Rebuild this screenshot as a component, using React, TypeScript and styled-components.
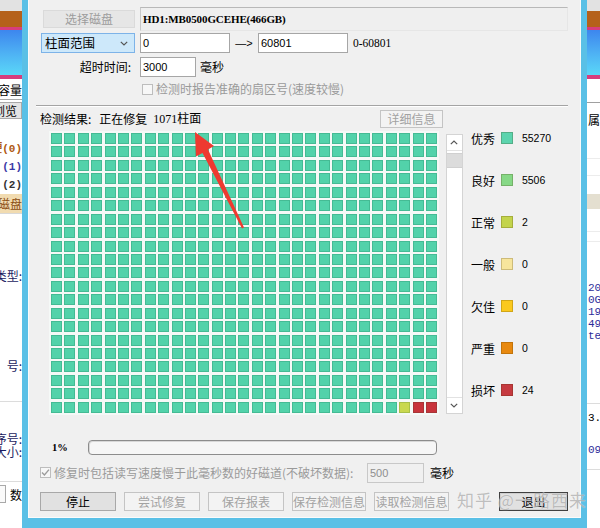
import React from "react";
import styled, { createGlobalStyle } from "styled-components";

const GlobalStyle = createGlobalStyle`
  html, body { margin: 0; padding: 0; background: #fff; }
  body {
    font-family: "Noto Sans CJK SC", "Noto Sans", sans-serif;
    font-size: 12px;
    color: #000;
  }
  * { box-sizing: border-box; }
`;

const CJK = `"Noto Sans CJK SC", "Noto Sans", sans-serif`;
const BLUE = "#5ac0e6";

/* ---------- page ---------- */
const Screen = styled.div`
  position: relative;
  width: 600px;
  height: 528px;
  overflow: hidden;
  display: flex;
  background: #fff;
`;

/* ---------- background windows (strips at the sides) ---------- */
const Strip = styled.div<{ $w: number }>`
  flex: none;
  width: ${(p) => p.$w}px;
  height: 100%;
  display: flex;
  flex-direction: column;
  overflow: hidden;
  background: #fff;
`;

const HeadLight = styled.div`
  flex: none;
  height: 11px;
  background: #e2e2e2;
`;
const HeadBrown = styled.div`
  flex: none;
  height: 16px;
  background: #b5611b;
`;
const HeadAccent = styled.div`
  flex: none;
  height: 3px;
  background: #d73d7e;
`;
const HeadGradient = styled.div`
  flex: none;
  height: 45px;
  background: linear-gradient(#3d86ee, #4fb4f4 55%, #5ad7f8);
`;
const HeadAccentLow = styled.div`
  flex: none;
  height: 4px;
  background: #d73d7e;
`;

const StripRow = styled.div<{
  $h: number;
  $side: "left" | "right";
  $color?: string;
  $bg?: string;
  $line?: string;
  $mono?: boolean;
  $bold?: boolean;
}>`
  flex: none;
  height: ${(p) => p.$h}px;
  display: flex;
  align-items: center;
  justify-content: ${(p) => (p.$side === "left" ? "flex-end" : "flex-start")};
  padding-left: ${(p) => (p.$side === "right" ? "1px" : "0")};
  white-space: nowrap;
  font-family: ${(p) => (p.$mono ? `"Liberation Mono", ${CJK}` : CJK)};
  font-size: ${(p) => (p.$mono ? "11px" : "12px")};
  font-weight: ${(p) => (p.$bold ? 700 : 400)};
  line-height: 13px;
  color: ${(p) => p.$color || "#000"};
  background: ${(p) => p.$bg || "transparent"};
  border-bottom: ${(p) => (p.$line ? `1px solid ${p.$line}` : "0")};
`;

const StripButton = styled.div`
  height: 17px;
  margin-left: 3px;
  padding: 0 4px;
  border: 1px solid #a9a9a9;
  background: #e4e4e4;
  line-height: 15px;
  font-size: 12px;
`;

const StripBox = styled.div`
  width: 10px;
  height: 18px;
  margin-right: 4px;
  border: 1px solid #a9a9a9;
  background: #fafafa;
  flex: none;
`;

/* ---------- dialog ---------- */
const Dialog = styled.div`
  flex: none;
  width: 565px;
  height: 528px;
  border: 6px solid ${BLUE};
  border-top: 0;
  border-bottom-width: 10px;
  background: #f0f0f0;
  box-shadow: inset 1px 0 0 #fbfbfb, inset -1px 0 0 #fbfbfb, inset 0 -1px 0 #fbfbfb;
  display: flex;
  flex-direction: column;
  padding: 0 13px 0 12px;
`;

const Row = styled.div<{ $top: number; $h: number }>`
  flex: none;
  display: flex;
  align-items: center;
  margin-top: ${(p) => p.$top}px;
  height: ${(p) => p.$h}px;
  white-space: nowrap;
  line-height: 14px;
`;

const DiskButton = styled.div`
  width: 92px;
  height: 18px;
  margin-left: 3px;
  background: #e6e6e6;
  border: 1px solid #dadada;
  color: #9c9c9c;
  text-align: center;
  line-height: 16px;
`;

const DiskLabel = styled.div`
  margin-left: 5px;
  width: 428px;
  height: 24px;
  display: flex;
  align-items: center;
  padding-left: 2px;
  background: #efefef;
  border: 1px solid #e6e6e6;
  border-top-color: #b8b8b8;
  border-left-color: #c8c8c8;
  font-family: "Liberation Serif", ${CJK};
  font-weight: 700;
  font-size: 11px;
  letter-spacing: -0.1px;
`;

const Select = styled.div`
  width: 94px;
  height: 20px;
  margin-left: 1px;
  display: flex;
  align-items: center;
  justify-content: space-between;
  padding: 0 6px 0 3px;
  background: #cde8fa;
  border: 1px solid #7db3e8;
  font-size: 12.5px;
`;

const TextBox = styled.div<{ $w: number; $disabled?: boolean; $gap?: number }>`
  width: ${(p) => p.$w}px;
  height: 20px;
  margin-left: ${(p) => p.$gap || 0}px;
  display: flex;
  align-items: center;
  padding-left: 2px;
  background: ${(p) => (p.$disabled ? "#f0f0f0" : "#fff")};
  border: 1px solid ${(p) => (p.$disabled ? "#c8c8c8" : "#a6a6a6")};
  color: ${(p) => (p.$disabled ? "#8e8e8e" : "#000")};
  font-family: "Liberation Sans", ${CJK};
  font-size: 11px;
`;

const ArrowText = styled.div`
  width: 28px;
  text-align: center;
  font-family: "Liberation Sans", sans-serif;
  font-size: 11px;
`;

const Hint = styled.div<{ $gap: number; $muted?: boolean }>`
  margin-left: ${(p) => p.$gap}px;
  color: ${(p) => (p.$muted ? "#9a9a9a" : "#000")};
  font-size: 12px;
`;

const RangeHint = styled.div`
  margin-left: 5px;
  font-family: "Liberation Serif", serif;
  font-size: 11.5px;
`;

const FieldLabel = styled.div`
  width: 91px;
  text-align: right;
  font-size: 12px;
  margin-right: 9px;
`;

const CheckBox = styled.div<{ $gap: number }>`
  flex: none;
  width: 11px;
  height: 11px;
  margin-left: ${(p) => p.$gap}px;
  border: 1px solid #bdbdbd;
  background: #f7f7f7;
  display: flex;
  align-items: center;
  justify-content: center;
`;

const Separator = styled.div`
  flex: none;
  margin-top: 9px;
  margin-left: -4px;
  width: 532px;
  height: 2px;
  border-top: 1px solid #a4a4a4;
  border-bottom: 1px solid #fff;
`;

const Status = styled.div`
  width: 340px;
  display: flex;
  align-items: center;
`;

const StatusPart = styled.span<{ $gap: number; $serif?: boolean }>`
  margin-left: ${(p) => p.$gap}px;
  font-family: ${(p) => (p.$serif ? `"Liberation Serif", ${CJK}` : CJK)};
  font-size: 12px;
`;

const Button = styled.div<{ $w: number; $kind: "normal" | "disabled" | "default"; $h?: number }>`
  flex: none;
  width: ${(p) => p.$w}px;
  height: ${(p) => p.$h || 19}px;
  display: flex;
  align-items: center;
  justify-content: center;
  font-size: 12px;
  background: ${(p) => (p.$kind === "disabled" ? "#f3f3f3" : "#e1e1e1")};
  border: 1px solid
    ${(p) => (p.$kind === "disabled" ? "#c4c4c4" : p.$kind === "default" ? "#404040" : "#a8a8a8")};
  color: ${(p) => (p.$kind === "disabled" ? "#a2a2a2" : "#000")};
  box-shadow: ${(p) => (p.$kind === "default" ? "inset 0 0 0 1px #cfcfcf" : "none")};
`;

/* ---------- map ---------- */
const MapArea = styled.div`
  flex: none;
  display: flex;
  align-items: flex-start;
  margin-top: 3px;
  height: 286px;
`;

const CellGrid = styled.div`
  margin-left: 9px;
  padding: 2px;
  display: grid;
  grid-template-columns: repeat(29, 11px);
  grid-auto-rows: 11px;
  column-gap: 2.4px;
  row-gap: 2.45px;
  background: #f5f9f7;
`;

const Cell = styled.div<{ $c: string }>`
  background: ${(p) => p.$c};
  box-shadow: inset 0 0 0 1px rgba(0, 70, 40, 0.16);
`;

const ScrollBar = styled.div`
  flex: none;
  margin-left: 7px;
  margin-top: 3px;
  width: 17px;
  height: 280px;
  background: #fff;
  border: 1px solid #d4d4d4;
  display: flex;
  flex-direction: column;
`;

const ScrollArrow = styled.div<{ $down?: boolean }>`
  flex: none;
  height: 16px;
  display: flex;
  align-items: center;
  justify-content: center;
  border-bottom: ${(p) => (p.$down ? "0" : "1px solid #e2e2e2")};
  border-top: ${(p) => (p.$down ? "1px solid #e2e2e2" : "0")};
`;

const ScrollThumb = styled.div`
  flex: none;
  margin-top: 2px;
  height: 15px;
  background: #dcdcdc;
  border-top: 1px solid #d0d0d0;
  border-bottom: 1px solid #d0d0d0;
`;

const ScrollTrack = styled.div`
  flex: 1;
`;

const Legend = styled.div`
  margin-left: 8px;
  display: flex;
  flex-direction: column;
  gap: 28px;
`;

const LegendItem = styled.div`
  height: 14px;
  display: flex;
  align-items: center;
`;

const LegendLabel = styled.div`
  width: 30px;
  font-size: 12px;
`;

const Swatch = styled.div<{ $c: string }>`
  width: 12px;
  height: 12px;
  background: ${(p) => p.$c};
  box-shadow: inset 0 0 0 1px rgba(60, 40, 0, 0.22);
`;

const LegendValue = styled.div`
  margin-left: 9px;
  font-family: "Liberation Sans", sans-serif;
  font-size: 10.5px;
`;

/* ---------- progress ---------- */
const Percent = styled.div`
  width: 36px;
  margin-left: 12px;
  font-family: "Liberation Serif", serif;
  font-weight: 700;
  font-size: 10.5px;
`;

const ProgressBar = styled.div`
  width: 349px;
  height: 15px;
  border: 1px solid #8c8c8c;
  border-radius: 4px;
  background: #f6f6f6;
  box-shadow: inset 1px 1px 0 #d8d8d8;
`;

const CheckText = styled.div`
  width: 313px;
  margin-left: 3px;
  color: #9a9a9a;
  font-size: 12px;
`;

const ButtonBar = styled.div`
  flex: none;
  display: flex;
  gap: 8px;
  margin-top: 10px;
  height: 19px;
`;

const Spacer = styled.div`
  flex: 1;
`;

/* ---------- overlays ---------- */
const Watermark = styled.div`
  position: absolute;
  left: 457px;
  top: 488px;
  font-family: ${CJK};
  font-size: 17px;
  letter-spacing: 1px;
  line-height: 24px;
  white-space: nowrap;
  color: rgba(150, 150, 150, 0.6);
  text-shadow: 0 0 1px rgba(255, 255, 255, 0.7);
  pointer-events: none;
`;

const ArrowOverlay = styled.svg`
  position: absolute;
  left: 0;
  top: 0;
  pointer-events: none;
`;

const Chevron = ({ up }: { up?: boolean }) => (
  <svg width="8" height="5" viewBox="0 0 8 5">
    <path
      d={up ? "M0.8 4.2 L4 1 L7.2 4.2" : "M0.8 0.8 L4 4 L7.2 0.8"}
      fill="none"
      stroke="#555"
      strokeWidth="1.2"
    />
  </svg>
);

const legend = [
  { label: "优秀", color: "#5cd4ae", value: "55270" },
  { label: "良好", color: "#86d886", value: "5506" },
  { label: "正常", color: "#c3d44c", value: "2" },
  { label: "一般", color: "#f7e59c", value: "0" },
  { label: "欠佳", color: "#fbc91e", value: "0" },
  { label: "严重", color: "#e8890f", value: "0" },
  { label: "损坏", color: "#c63a40", value: "24" },
];

const special: Record<number, string> = {
  606: "#c9d84f",
  607: "#c8343c",
  608: "#c8343c",
};

const cells = Array.from({ length: 29 * 21 }, (_, i) => special[i] || "#52d2aa");

function Heads() {
  return (
    <>
      <HeadLight />
      <HeadBrown />
      <HeadAccent />
      <HeadGradient />
      <HeadAccentLow />
    </>
  );
}

export default function App() {
  return (
    <>
      <GlobalStyle />
      <Screen>
        <Strip $w={22}>
          <Heads />
          <StripRow $side="left" $h={21} $line="#a8a8a8">磁盘容量</StripRow>
          <StripRow $side="left" $h={20}>
            <StripButton>浏览</StripButton>
          </StripRow>
          <StripRow $side="left" $h={20} />
          <StripRow $side="left" $h={18} $mono $bold $color="#b05a12">硬(0)</StripRow>
          <StripRow $side="left" $h={18} $mono $bold $color="#3a3aa6">(1)</StripRow>
          <StripRow $side="left" $h={18} $mono $bold $color="#333">(2)</StripRow>
          <StripRow $side="left" $h={20} $bg="#f1dbb0" $color="#8a4b10" $line="#d8d8d8">的磁盘</StripRow>
          <StripRow $side="left" $h={52} />
          <StripRow $side="left" $h={18} $color="#1b1b60">类型:</StripRow>
          <StripRow $side="left" $h={72} />
          <StripRow $side="left" $h={18} $color="#1b1b60">号:</StripRow>
          <StripRow $side="left" $h={28} $line="#dcdcdc" />
          <StripRow $side="left" $h={30} />
          <StripRow $side="left" $h={13} $color="#1b1b60">序号:</StripRow>
          <StripRow $side="left" $h={13} $color="#1b1b60">大小:</StripRow>
          <StripRow $side="left" $h={24} $line="#dcdcdc" />
          <StripRow $side="left" $h={24}>
            <StripBox />
            <span>数</span>
          </StripRow>
        </Strip>

        <Dialog>
          <Row $top={7} $h={24}>
            <DiskButton>选择磁盘</DiskButton>
            <DiskLabel>HD1:MB0500GCEHE(466GB)</DiskLabel>
          </Row>

          <Row $top={2} $h={20}>
            <Select>
              <span>柱面范围</span>
              <Chevron />
            </Select>
            <TextBox $w={90} $gap={5}>0</TextBox>
            <ArrowText>—&gt;</ArrowText>
            <TextBox $w={90}>60801</TextBox>
            <RangeHint>0-60801</RangeHint>
          </Row>

          <Row $top={4} $h={20}>
            <FieldLabel>超时时间:</FieldLabel>
            <TextBox $w={56}>3000</TextBox>
            <Hint $gap={4}>毫秒</Hint>
          </Row>

          <Row $top={5} $h={14}>
            <CheckBox $gap={102} />
            <Hint $gap={3} $muted>检测时报告准确的扇区号(速度较慢)</Hint>
          </Row>

          <Separator />

          <Row $top={3} $h={18}>
            <Status>
              <StatusPart $gap={0}>检测结果:</StatusPart>
              <StatusPart $gap={8}>正在修复</StatusPart>
              <StatusPart $gap={6} $serif>1071柱面</StatusPart>
            </Status>
            <Button $w={63} $h={18} $kind="disabled">详细信息</Button>
          </Row>

          <MapArea>
            <CellGrid>
              {cells.map((c, i) => (
                <Cell key={i} $c={c} />
              ))}
            </CellGrid>
            <ScrollBar>
              <ScrollArrow>
                <Chevron up />
              </ScrollArrow>
              <ScrollThumb />
              <ScrollTrack />
              <ScrollArrow $down>
                <Chevron />
              </ScrollArrow>
            </ScrollBar>
            <Legend>
              {legend.map((l) => (
                <LegendItem key={l.label}>
                  <LegendLabel>{l.label}</LegendLabel>
                  <Swatch $c={l.color} />
                  <LegendValue>{l.value}</LegendValue>
                </LegendItem>
              ))}
            </Legend>
          </MapArea>

          <Row $top={23} $h={15}>
            <Percent>1%</Percent>
            <ProgressBar />
          </Row>

          <Row $top={8} $h={19}>
            <CheckBox $gap={0}>
              <svg width="9" height="9" viewBox="0 0 9 9">
                <path d="M1 4.6 L3.4 7 L8 1.6" fill="none" stroke="#9c9c9c" strokeWidth="1.4" />
              </svg>
            </CheckBox>
            <CheckText>修复时包括读写速度慢于此毫秒数的好磁道(不破坏数据):</CheckText>
            <TextBox $w={57} $disabled>500</TextBox>
            <Hint $gap={6}>毫秒</Hint>
          </Row>

          <ButtonBar>
            <Button $w={76} $kind="normal">停止</Button>
            <Button $w={76} $kind="disabled">尝试修复</Button>
            <Button $w={76} $kind="disabled">保存报表</Button>
            <Button $w={74} $kind="disabled">保存检测信息</Button>
            <Button $w={75} $kind="disabled">读取检测信息</Button>
            <Spacer />
            <Button $w={69} $kind="default">退出</Button>
          </ButtonBar>
        </Dialog>

        <Strip $w={13}>
          <Heads />
          <StripRow $side="right" $h={24} $line="#a0a0a0" />
          <StripRow $side="right" $h={32}>属性</StripRow>
          <StripRow $side="right" $h={24} $line="#ececec" />
          <StripRow $side="right" $h={17} $line="#ececec" />
          <StripRow $side="right" $h={18} />
          <StripRow $side="right" $h={15} $bg="#e4dfd0" />
          <StripRow $side="right" $h={23} $line="#ececec" />
          <StripRow $side="right" $h={10} $line="#ececec" />
          <StripRow $side="right" $h={40} />
          <StripRow $side="right" $h={12} $mono $color="#2d2d9a">2018</StripRow>
          <StripRow $side="right" $h={12} $mono $color="#2d2d9a">0GB</StripRow>
          <StripRow $side="right" $h={12} $mono $color="#2d2d9a">19</StripRow>
          <StripRow $side="right" $h={12} $mono $color="#2d2d9a">49</StripRow>
          <StripRow $side="right" $h={12} $mono $color="#2d2d9a">te</StripRow>
          <StripRow $side="right" $h={62} $line="#dcdcdc" />
          <StripRow $side="right" $h={28} $mono>3.</StripRow>
          <StripRow $side="right" $h={8} />
          <StripRow $side="right" $h={20} $mono $color="#2d2d9a">09</StripRow>
          <StripRow $side="right" $h={10} $line="#dcdcdc" />
        </Strip>

        <ArrowOverlay width="600" height="528" viewBox="0 0 600 528">
          <polygon
            points="195,132 214,146 208,149.5 244,227.5 242,228.5 202.5,153 196,156.5"
            fill="#ee3a30"
          />
        </ArrowOverlay>

        <Watermark>知乎 @一路西来</Watermark>
      </Screen>
    </>
  );
}
